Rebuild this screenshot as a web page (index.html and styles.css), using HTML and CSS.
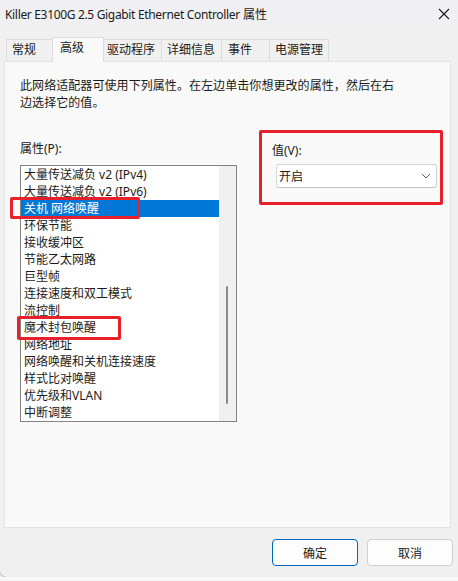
FILE: index.html
```html
<!DOCTYPE html>
<html lang="zh-CN">
<head>
<meta charset="utf-8">
<title>属性</title>
<link rel="stylesheet" href="styles.css">
</head>
<body>
<div class="window">
  <div class="titlebar">
    <span class="title"><span class="title-latin">Killer E3100G 2.5 Gigabit Ethernet Controller</span> 属性</span>
    <svg class="close" width="12" height="12" viewBox="0 0 12 12"><path d="M1 1 L11 11 M11 1 L1 11" stroke="#1b1b1b" stroke-width="1.1" fill="none"/></svg>
  </div>
  <div class="tabs">
    <div class="tab t1">常规</div>
    <div class="tab t2 active">高级</div>
    <div class="tab t3">驱动程序</div>
    <div class="tab t4">详细信息</div>
    <div class="tab t5">事件</div>
    <div class="tab t6">电源管理</div>
  </div>
  <div class="panel">
    <p class="desc">此网络适配器可使用下列属性。在左边单击你想更改的属性，然后在右<br>边选择它的值。</p>
    <div class="props">
      <div class="col-left">
        <div class="label">属性(P):</div>
        <div class="listbox">
          <ul class="items">
            <li>大量传送减负 v2 (IPv4)</li>
            <li>大量传送减负 v2 (IPv6)</li>
            <li class="selected">关机 网络唤醒</li>
            <li>环保节能</li>
            <li>接收缓冲区</li>
            <li>节能乙太网路</li>
            <li>巨型帧</li>
            <li>连接速度和双工模式</li>
            <li>流控制</li>
            <li>魔术封包唤醒</li>
            <li>网络地址</li>
            <li>网络唤醒和关机连接速度</li>
            <li>样式比对唤醒</li>
            <li>优先级和VLAN</li>
            <li>中断调整</li>
          </ul>
          <div class="scrollbar"><div class="thumb"></div></div>
        </div>
      </div>
      <div class="col-right">
        <div class="label">值(V):</div>
        <div class="combo">
          <span>开启</span>
          <svg width="10" height="6" viewBox="0 0 10 6"><path d="M1 1 L5 5 L9 1" stroke="#5f5f5f" stroke-width="1" fill="none"/></svg>
        </div>
      </div>
    </div>
  </div>
  <div class="buttons">
    <button class="btn primary">确定</button>
    <button class="btn">取消</button>
  </div>
  <div class="mark mark-1"></div>
  <div class="mark mark-2"></div>
  <div class="mark mark-3"></div>
</div>
</body>
</html>
```
FILE: styles.css
```css
* { box-sizing: border-box; }
html, body {
  margin: 0;
  padding: 0;
  background: #f7f7f7;
}
body {
  font-family: "Noto Sans", "Noto Sans CJK SC", sans-serif;
  font-size: 12px;
  color: #1a1a1a;
}
.window {
  position: relative;
  width: 458px;
  height: 577px;
  background: #f0f0f0;
  border-radius: 0 0 0 7px;
  box-shadow: 0 1px 2px rgba(0,0,0,0.35);
  display: flex;
  flex-direction: column;
}
.titlebar {
  height: 27px;
  display: flex;
  align-items: center;
  justify-content: space-between;
  padding: 0 8px 0 5px;
  background: #f0f0f2;
}
.title {
  white-space: nowrap;
}
.title-latin {
  letter-spacing: -0.33px;
}
.close { display: block; }

.tabs {
  margin-top: 10px;
  height: 25px;
  padding-left: 6px;
  display: flex;
  align-items: flex-end;
}
.tab {
  height: 23px;
  border: 1px solid #dcdcdc;
  border-bottom: none;
  background: #f0f0f0;
  line-height: 16px;
  padding-top: 2px;
  white-space: nowrap;
  margin-left: -1px;
}
.tab.t1 { margin-left: 0; width: 47px; padding-left: 5px; }
.tab.t2 { width: 52px; padding-left: 7px; }
.tab.t3 { width: 59px; padding-left: 3px; }
.tab.t4 { width: 61px; padding-left: 5px; }
.tab.t5 { width: 49px; padding-left: 6px; }
.tab.t6 { width: 60px; padding-left: 5px; }
.tab.active {
  height: 25px;
  background: #f9f9f9;
  position: relative;
  z-index: 2;
}

.panel {
  position: relative;
  z-index: 1;
  margin: -1px 7px 0 4px;
  height: 467px;
  background: #f9f9f9;
  border: 1px solid #e3e3e3;
  padding: 16px 15px 0 15px;
}
.desc {
  margin: 0;
  line-height: 16.5px;
  letter-spacing: 0.07px;
}
.props {
  margin-top: 30px;
  display: flex;
  gap: 35px;
}
.label {
  line-height: 16px;
}
.col-left .label { margin-bottom: 8px; }
.col-right { padding-top: 2px; }
.col-right .label { margin-bottom: 5px; }

.listbox {
  width: 217px;
  height: 257px;
  border: 1px solid #838383;
  background: #ffffff;
  display: flex;
}
.items {
  list-style: none;
  margin: 0;
  padding: 0;
  width: 198px;
}
.items li {
  height: 17px;
  line-height: 17px;
  padding-left: 3px;
  white-space: nowrap;
}
.items li.selected {
  background: #0078d7;
  color: #ffffff;
}
.scrollbar {
  width: 17px;
  height: 255px;
  background: #f0f0f0;
  padding-left: 7px;
}
.thumb {
  margin-top: 120px;
  width: 2px;
  height: 118px;
  border-radius: 1px;
  background: #8a8a8a;
}

.combo {
  margin-left: 4px;
  width: 161px;
  height: 24px;
  background: #ffffff;
  border: 1px solid #d6d6d6;
  border-bottom-color: #c4c4c4;
  border-radius: 3px;
  display: flex;
  align-items: center;
  justify-content: space-between;
  padding: 0 5px 0 2px;
}
.combo svg { display: block; }

.buttons {
  margin-top: 11px;
  display: flex;
  justify-content: flex-end;
  gap: 9px;
  padding-right: 5px;
}
.btn {
  width: 86px;
  height: 27px;
  background: #fdfdfd;
  border: 1px solid #d0d0d0;
  border-radius: 4px;
  font-family: "Noto Sans", "Noto Sans CJK SC", sans-serif;
  font-size: 12px;
  color: #1a1a1a;
  padding: 0;
}
.btn.primary {
  border-color: #0067c0;
}

.mark {
  position: absolute;
  border: 3px solid #e8202b;
  border-radius: 2px;
  z-index: 5;
}
.mark-1 { left: 10px; top: 197px; width: 130px; height: 22px; }
.mark-2 { left: 17px; top: 316px; width: 104px; height: 24px; }
.mark-3 { left: 259px; top: 130px; width: 184px; height: 75px; }
```
